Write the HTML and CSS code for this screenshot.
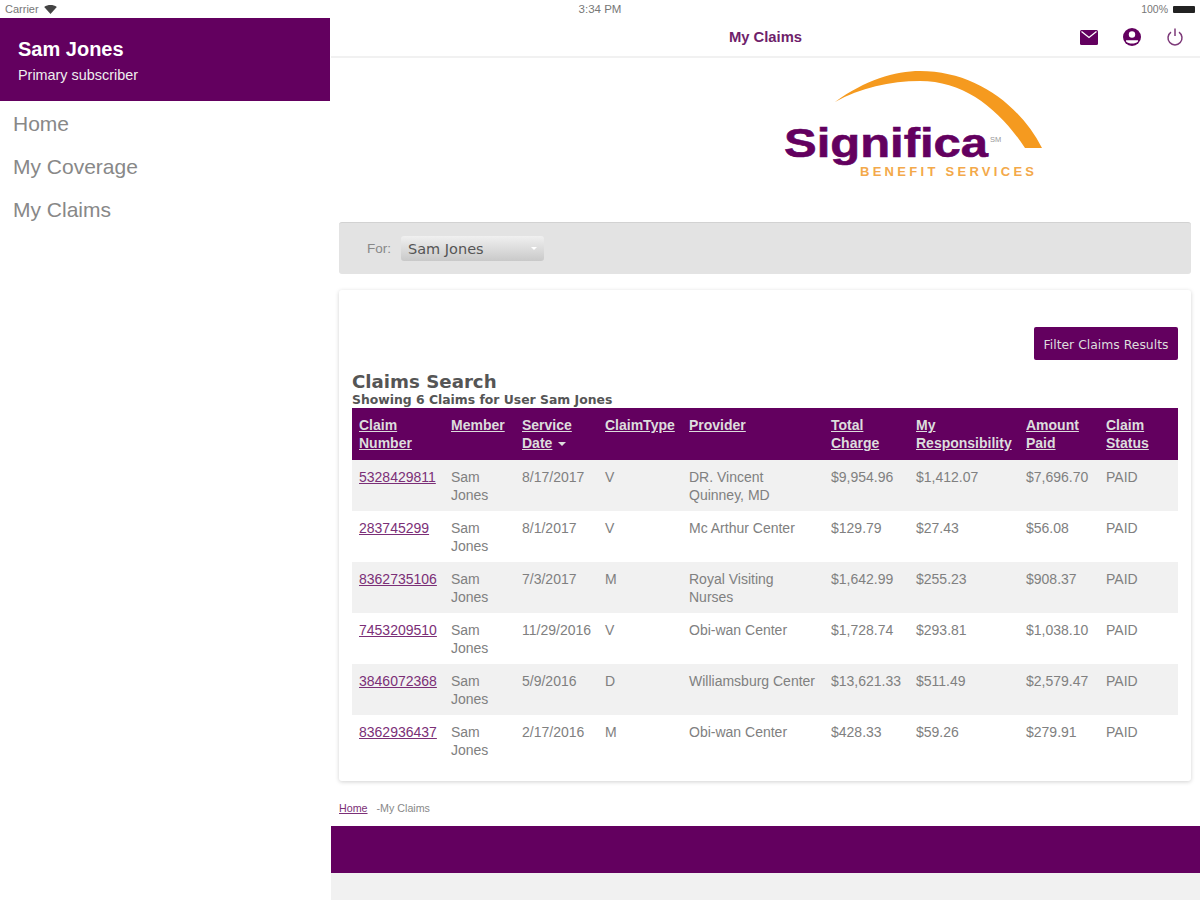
FILE: index.html
```html
<!DOCTYPE html>
<html lang="en">
<head>
  <meta charset="UTF-8" />
  <title>My Claims</title>
  <link rel="stylesheet" href="styles.css">
</head>
<body>
  <div class="status-bar">
    <div class="status-left">
      <span class="carrier">Carrier</span>
      <svg class="wifi" viewBox="0 0 14 10"><path d="M0 2.2C4 -.7 10 -.7 14 2.2L7 10Z"/></svg>
    </div>
    <div class="status-time">3:34 PM</div>
    <div class="status-right">
      <span>100%</span>
      <div class="battery"></div>
    </div>
  </div>

  <div class="app">
    <div class="sidebar">
      <div class="user-box">
        <div class="user-name">Sam Jones</div>
        <div class="user-role">Primary subscriber</div>
      </div>
      <ul class="side-nav">
        <li>Home</li>
        <li>My Coverage</li>
        <li>My Claims</li>
      </ul>
    </div>

    <div class="main">
      <div class="topbar">
        <div></div>
        <div class="topbar-title">My Claims</div>
        <div class="topbar-icons">
          <svg viewBox="0 0 20 20"><rect x="1" y="3" width="18" height="15" rx="1.5" fill="#63005f"/><path d="M2.500 4.500L10 10.500L17.500 4.500" fill="none" stroke="#fff" stroke-width="1.300"/></svg>
          <svg viewBox="0 0 20 20"><circle cx="10" cy="10" r="9" fill="#63005f"/><circle cx="10" cy="7.500" r="3.200" fill="#fff"/><path d="M4 13.200H16V14.500C14.500 16 12.500 16.600 10 16.600C7.500 16.600 5.500 16 4 14.500Z" fill="#fff"/></svg>
          <svg viewBox="0 0 20 20"><path d="M6 5.200A7 7 0 1 0 14 5.200" fill="none" stroke="#7d3a79" stroke-width="1.500"/><path d="M10 1.500V9" fill="none" stroke="#7d3a79" stroke-width="1.500"/></svg>
        </div>
      </div>

      <div class="logo-row">
        <svg class="logo" viewBox="780 65 265 115">
          <path d="M835 102C865 80 895 71 920 71C975 71 1020 105 1042 148L1025 148C1000 110 965 81 920 81C890 81 860 88 835 102Z" fill="#f59a1f"/>
          <text x="784" y="157" class="logo-name" textLength="204" lengthAdjust="spacingAndGlyphs">Significa</text>
          <text x="990" y="142" class="logo-sm">SM</text>
          <text x="860" y="176" class="logo-sub" textLength="174">BENEFIT SERVICES</text>
        </svg>
      </div>

      <div class="for-bar">
        <span class="for-label">For:</span>
        <div class="for-select">
          <span>Sam Jones</span>
          <i class="for-caret"></i>
        </div>
      </div>

      <div class="card">
        <div class="card-actions">
          <div class="filter-btn">Filter Claims Results</div>
        </div>
        <h2 class="search-title">Claims Search</h2>
        <div class="search-sub">Showing 6 Claims for User Sam Jones</div>
        <table class="claims">
          <colgroup>
            <col class="c-number"><col class="c-member"><col class="c-date"><col class="c-type"><col class="c-provider"><col class="c-total"><col class="c-resp"><col class="c-paid"><col class="c-status">
          </colgroup>
          <thead>
            <tr>
              <th><a>Claim Number</a></th>
              <th><a>Member</a></th>
              <th><a>Service Date</a> <i class="sort-caret"></i></th>
              <th><a>ClaimType</a></th>
              <th><a>Provider</a></th>
              <th><a>Total Charge</a></th>
              <th><a>My Responsibility</a></th>
              <th><a>Amount Paid</a></th>
              <th><a>Claim Status</a></th>
            </tr>
          </thead>
          <tbody>
            <tr><td><a>5328429811</a></td><td>Sam Jones</td><td>8/17/2017</td><td>V</td><td>DR. Vincent Quinney, MD</td><td>$9,954.96</td><td>$1,412.07</td><td>$7,696.70</td><td>PAID</td></tr>
            <tr><td><a>283745299</a></td><td>Sam Jones</td><td>8/1/2017</td><td>V</td><td>Mc Arthur Center</td><td>$129.79</td><td>$27.43</td><td>$56.08</td><td>PAID</td></tr>
            <tr><td><a>8362735106</a></td><td>Sam Jones</td><td>7/3/2017</td><td>M</td><td>Royal Visiting Nurses</td><td>$1,642.99</td><td>$255.23</td><td>$908.37</td><td>PAID</td></tr>
            <tr><td><a>7453209510</a></td><td>Sam Jones</td><td>11/29/2016</td><td>V</td><td>Obi-wan Center</td><td>$1,728.74</td><td>$293.81</td><td>$1,038.10</td><td>PAID</td></tr>
            <tr><td><a>3846072368</a></td><td>Sam Jones</td><td>5/9/2016</td><td>D</td><td>Williamsburg Center</td><td>$13,621.33</td><td>$511.49</td><td>$2,579.47</td><td>PAID</td></tr>
            <tr><td><a>8362936437</a></td><td>Sam Jones</td><td>2/17/2016</td><td>M</td><td>Obi-wan Center</td><td>$428.33</td><td>$59.26</td><td>$279.91</td><td>PAID</td></tr>
          </tbody>
        </table>
      </div>

      <div class="crumbs">
        <a>Home</a>
        <span>-My Claims</span>
      </div>
      <div class="footer-band"></div>
      <div class="footer-rest"></div>
    </div>
  </div>
</body>
</html>
```

FILE: styles.css
```css
* {
  box-sizing: border-box;
}
html, body {
  margin: 0;
  padding: 0;
  width: 100%;
  height: 100%;
  background: white;
  overflow: hidden;
  font-family: "Liberation Sans", Arial, sans-serif;
}
body {
  display: flex;
  flex-direction: column;
}

/* status bar */
.status-bar {
  height: 18px;
  padding: 0 5px;
  display: flex;
  align-items: center;
  font-size: 10.5px;
  color: #777;
}
.status-left, .status-right {
  flex: 1;
  display: flex;
  align-items: center;
  gap: 5px;
}
.status-right {
  justify-content: flex-end;
}
.carrier {
  font-size: 11px;
}
.status-time {
  font-size: 11.5px;
}
.wifi {
  width: 13px;
  height: 9px;
  fill: #444;
}
.battery {
  width: 22px;
  height: 7px;
  background: #222;
  border-radius: 1px;
}

.app {
  flex: 1;
  display: flex;
  min-height: 0;
}

/* sidebar */
.sidebar {
  width: 331px;
  flex-shrink: 0;
  padding-right: 1px;
}
.user-box {
  height: 83px;
  padding: 19px 18px 0;
  background: #63005f;
  color: white;
}
.user-name {
  font-size: 20px;
  line-height: 24px;
  font-weight: bold;
}
.user-role {
  margin-top: 5px;
  font-size: 14.4px;
  line-height: 18px;
  color: #eee;
}
.side-nav {
  list-style: none;
  margin: 0;
  padding: 1px 0 0 13px;
}
.side-nav li {
  font-size: 21px;
  line-height: 43px;
  color: #888;
}

/* main column */
.main {
  flex: 1;
  display: flex;
  flex-direction: column;
  min-width: 0;
}
.topbar {
  height: 40px;
  padding-right: 15px;
  display: grid;
  grid-template-columns: 1fr auto 1fr;
  align-items: center;
  border-bottom: 2px solid #f1f1f1;
}
.topbar-title {
  padding-left: 15px;
  font-size: 14.8px;
  font-weight: bold;
  color: #6f1f6b;
}
.topbar-icons {
  display: flex;
  justify-content: flex-end;
  gap: 23px;
}
.topbar-icons svg {
  width: 20px;
  height: 20px;
}

.logo-row {
  height: 164px;
  padding: 7px 0 0 449px;
}
.logo {
  display: block;
  width: 265px;
  height: 115px;
}
.logo-name {
  font-size: 40px;
  font-weight: bold;
  fill: #63005f;
  stroke: #63005f;
  stroke-width: 0.6px;
}
.logo-sm {
  font-size: 7.5px;
  fill: #999;
}
.logo-sub {
  font-size: 13px;
  font-weight: bold;
  fill: #f3a94a;
}

.for-bar {
  height: 52px;
  margin: 0 9px 16px 8px;
  padding-left: 28px;
  display: flex;
  align-items: center;
  gap: 10px;
  background: #e3e3e3;
  border-top: 1px solid #d2d2d2;
  border-radius: 3px;
}
.for-label {
  font-size: 13.5px;
  color: #888;
}
.for-select {
  width: 143px;
  height: 25px;
  padding: 0 7px;
  display: flex;
  align-items: center;
  justify-content: space-between;
  background: linear-gradient(#f0f0f0, #c9c9c9);
  border-radius: 3px;
  font-family: "DejaVu Sans", sans-serif;
  font-size: 14.5px;
  color: #555;
}
.for-caret {
  border: 3px solid transparent;
  border-top: 3px solid white;
  margin-top: 3px;
}

.card {
  margin: 0 9px 0 8px;
  padding: 37px 13px 15px;
  background: white;
  border-radius: 3px;
  box-shadow: 0 1px 4px rgba(0, 0, 0, 0.18);
}
.card-actions {
  display: flex;
  justify-content: flex-end;
}
.filter-btn {
  width: 144px;
  height: 33px;
  line-height: 35px;
  text-align: center;
  background: #63005f;
  border-radius: 2px;
  font-family: "DejaVu Sans", sans-serif;
  font-size: 12.4px;
  color: #ddd;
}
.search-title {
  margin: 12px 0 0;
  font-family: "DejaVu Sans", sans-serif;
  font-size: 18.2px;
  line-height: 20px;
  font-weight: bold;
  color: #555;
}
.search-sub {
  font-family: "DejaVu Sans", sans-serif;
  font-size: 12.4px;
  line-height: 16px;
  font-weight: bold;
  color: #555;
}

/* claims table */
.claims {
  width: 826px;
  table-layout: fixed;
  border-collapse: collapse;
  font-size: 14px;
  line-height: 18px;
}
.c-number { width: 92px; }
.c-member { width: 71px; }
.c-date { width: 83px; }
.c-type { width: 84px; }
.c-provider { width: 142px; }
.c-total { width: 85px; }
.c-resp { width: 110px; }
.c-paid { width: 80px; }
.c-status { width: 79px; }
.claims th {
  height: 52px;
  padding: 8px 4px 8px 7px;
  text-align: left;
  vertical-align: top;
  background: #63005f;
  color: #ddd;
}
.claims th a {
  text-decoration: underline;
}
.sort-caret {
  display: inline-block;
  margin-left: 2px;
  border: 4px solid transparent;
  border-top: 4px solid #ddd;
  border-bottom: 0;
  vertical-align: middle;
}
.claims td {
  height: 51px;
  padding: 8px 4px 7px 7px;
  vertical-align: top;
  color: #808080;
}
.claims td a {
  color: #7b2f77;
  text-decoration: underline;
}
.claims tbody tr:nth-child(odd) {
  background: #f1f1f1;
}

.crumbs {
  height: 45px;
  margin-left: 8px;
  padding-top: 21px;
  display: flex;
  gap: 9px;
  font-size: 10.7px;
  line-height: 12px;
  color: #888;
}
.crumbs a {
  color: #7b2f77;
  text-decoration: underline;
}
.footer-band {
  height: 47px;
  background: #63005f;
}
.footer-rest {
  flex: 1;
  background: #f1f1f1;
}
```
